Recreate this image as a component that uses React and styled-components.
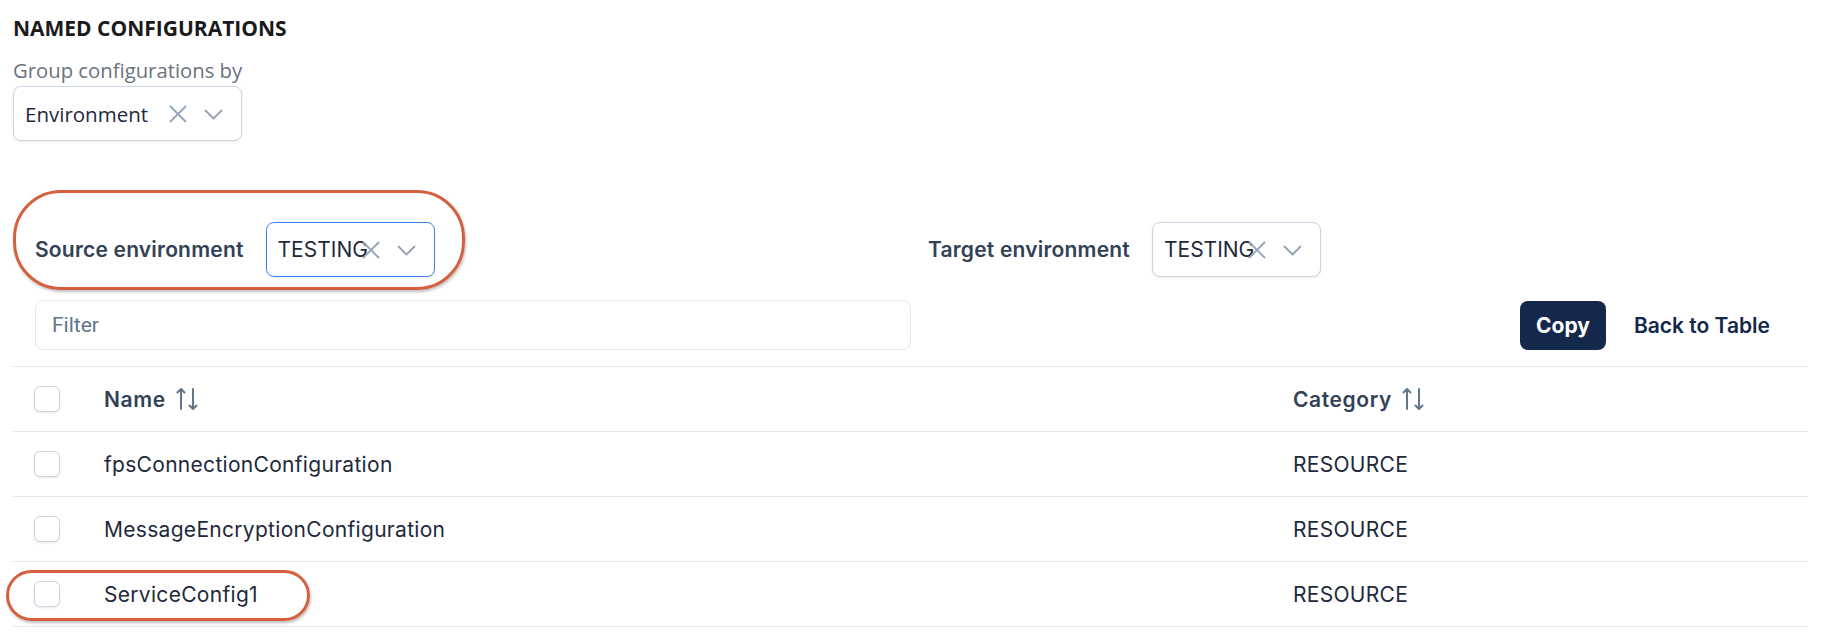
import React from 'react';
import styled, { createGlobalStyle } from 'styled-components';

const COLORS = {
  ink: '#1e293b',
  label: '#334155',
  muted: '#6b7280',
  icon: '#94a3b8',
  line: '#e2e8f0',
  border: '#cbd5e1',
  focus: '#3b82f6',
  navy: '#13284a',
  mark: '#d4603f',
};

const GlobalStyle = createGlobalStyle`
  * { box-sizing: border-box; }
  body {
    margin: 0;
    background: #ffffff;
    font-family: Inter, "Noto Sans", sans-serif;
    color: ${COLORS.ink};
  }
`;

const rows = [
  { name: 'fpsConnectionConfiguration', category: 'RESOURCE' },
  { name: 'MessageEncryptionConfiguration', category: 'RESOURCE' },
  { name: 'ServiceConfig1', category: 'RESOURCE', marked: true },
];

const ClearIcon = () => (
  <svg width="18" height="18" viewBox="0 0 18 18" fill="none">
    <path d="M1.5 1.5l15 15M16.5 1.5l-15 15" stroke={COLORS.icon} strokeWidth="1.8" strokeLinecap="round" />
  </svg>
);

const ChevronIcon = () => (
  <svg width="19" height="18" viewBox="0 0 19 18" fill="none">
    <path d="M1.5 5.5l8 8 8-8" stroke={COLORS.icon} strokeWidth="1.8" strokeLinecap="round" strokeLinejoin="round" />
  </svg>
);

const SortIcon = () => (
  <svg width="22" height="24" viewBox="0 0 22 24" fill="none">
    <path d="M5 22V2M1.5 5.5L5 2l3.5 3.5M17 2v20M13.5 18.5L17 22l3.5-3.5"
      stroke="#64748b" strokeWidth="2" strokeLinecap="round" strokeLinejoin="round" />
  </svg>
);

const Select = ({ value, width, focused }) => (
  <SelectBox $width={width} $focused={focused}>
    <SelectValue>{value}</SelectValue>
    <Indicators>
      <ClearIcon />
      <ChevronIcon />
    </Indicators>
  </SelectBox>
);

const App = () => (
  <>
    <GlobalStyle />
    <Page>
      <Title>NAMED CONFIGURATIONS</Title>
      <GroupLabel>Group configurations by</GroupLabel>
      <Select value="Environment" width={229} />

      <EnvRow>
        <Highlight />
        <EnvField>
          <EnvLabel>Source environment</EnvLabel>
          <Select value="TESTING" width={169} focused />
        </EnvField>
        <EnvField>
          <EnvLabel>Target environment</EnvLabel>
          <Select value="TESTING" width={169} />
        </EnvField>
      </EnvRow>

      <Toolbar>
        <FilterInput placeholder="Filter" />
        <Actions>
          <PrimaryButton>Copy</PrimaryButton>
          <GhostButton>Back to Table</GhostButton>
        </Actions>
      </Toolbar>

      <Table>
        <Row>
          <CheckCell><Checkbox /></CheckCell>
          <HeadCell>Name <SortIcon /></HeadCell>
          <HeadCell>Category <SortIcon /></HeadCell>
        </Row>
        {rows.map((row) => (
          <Row key={row.name}>
            {row.marked && <RowHighlight />}
            <CheckCell><Checkbox /></CheckCell>
            <Cell>{row.name}</Cell>
            <Cell>{row.category}</Cell>
          </Row>
        ))}
      </Table>
    </Page>
  </>
);

const Page = styled.div`
  padding: 14px 13px 0;
`;

const Title = styled.h2`
  margin: 0;
  font-family: "Open Sans", sans-serif;
  font-size: 21px;
  line-height: 28px;
  font-weight: 700;
  color: #1a1a1a;
`;

const GroupLabel = styled.div`
  margin-top: 16px;
  margin-bottom: 4px;
  font-family: "Open Sans", sans-serif;
  font-size: 20.3px;
  line-height: 24px;
  color: ${COLORS.muted};
`;

const SelectBox = styled.div`
  display: flex;
  align-items: center;
  width: ${(p) => p.$width}px;
  height: 55px;
  padding-left: 11px;
  background: #fff;
  border: 1px solid ${(p) => (p.$focused ? COLORS.focus : COLORS.border)};
  border-radius: 8px;
  box-shadow: 0 1px 3px rgba(15, 23, 42, 0.08);
`;

const SelectValue = styled.span`
  flex: 1;
  min-width: 0;
  white-space: nowrap;
  font-family: "Open Sans", sans-serif;
  font-size: 20.5px;
  color: ${COLORS.ink};
`;

const Indicators = styled.div`
  display: flex;
  align-items: center;
  gap: 17px;
  padding-right: 18px;
  flex-shrink: 0;
`;

const EnvRow = styled.div`
  position: relative;
  margin-top: 81px;
  padding: 0 22px;
  display: grid;
  grid-template-columns: 1fr 1fr;
  column-gap: 35px;

  ${SelectValue} {
    font-family: Inter, sans-serif;
    font-size: 21px;
  }
`;

const Highlight = styled.div`
  position: absolute;
  left: 0;
  top: -32px;
  width: 452px;
  height: 100px;
  border: 3px solid ${COLORS.mark};
  border-radius: 48px;
  box-shadow: 1px 2px 3px rgba(0, 0, 0, 0.25);
  pointer-events: none;
`;

const EnvField = styled.div`
  display: flex;
  align-items: center;
  gap: 22px;
`;

const EnvLabel = styled.span`
  font-size: 21px;
  font-weight: 600;
  letter-spacing: 0.2px;
  color: ${COLORS.label};
`;

const Toolbar = styled.div`
  margin-top: 23px;
  padding: 0 22px;
  display: flex;
  align-items: center;
  justify-content: space-between;
`;

const FilterInput = styled.input`
  width: 876px;
  height: 50px;
  padding: 0 16px;
  border: 1px solid ${COLORS.line};
  border-radius: 8px;
  font-family: Roboto, sans-serif;
  font-size: 21px;
  outline: none;

  &::placeholder {
    color: #64748b;
  }
`;

const Actions = styled.div`
  display: flex;
  align-items: center;
  gap: 12px;
`;

const PrimaryButton = styled.button`
  height: 49px;
  padding: 0 16px;
  border: none;
  border-radius: 8px;
  background: ${COLORS.navy};
  color: #fff;
  font-family: Inter, sans-serif;
  font-size: 21px;
  font-weight: 700;
`;

const GhostButton = styled(PrimaryButton)`
  background: transparent;
  color: ${COLORS.navy};
  font-weight: 600;
  font-size: 21px;
`;

const Table = styled.div`
  margin-top: 16px;
  border-top: 1px solid ${COLORS.line};
`;

const Row = styled.div`
  position: relative;
  display: grid;
  grid-template-columns: 91px 1189px 1fr;
  align-items: center;
  height: 65px;
  border-bottom: 1px solid ${COLORS.line};
`;

const RowHighlight = styled.div`
  position: absolute;
  left: -7px;
  top: 8px;
  width: 304px;
  height: 51px;
  border: 3px solid ${COLORS.mark};
  border-radius: 26px;
  box-shadow: 1px 2px 3px rgba(0, 0, 0, 0.25);
  pointer-events: none;
`;

const CheckCell = styled.div`
  padding-left: 21px;
  display: flex;
`;

const Checkbox = styled.span`
  width: 26px;
  height: 26px;
  border: 1px solid ${COLORS.border};
  border-radius: 6px;
  background: #fff;
  box-shadow: 0 1px 2px rgba(15, 23, 42, 0.1);
`;

const HeadCell = styled.div`
  display: flex;
  align-items: center;
  gap: 10px;
  font-size: 21px;
  font-weight: 600;
  letter-spacing: 0.6px;
  color: ${COLORS.label};
`;

const Cell = styled.div`
  font-size: 21px;
  letter-spacing: 0.3px;
  color: ${COLORS.ink};
`;

export default App;
